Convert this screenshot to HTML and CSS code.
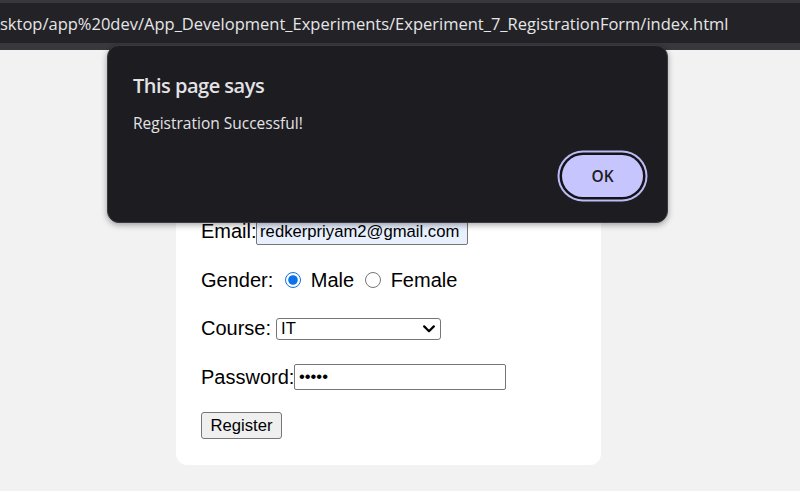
FILE: index.html
```html
<!DOCTYPE html>
<html lang="en">
<head>
<meta charset="utf-8">
<title>Registration Form</title>
<link rel="stylesheet" href="styles.css">
</head>
<body>
<header class="chrome">
  <div class="omnibox"><span class="url">sktop/app%20dev/App_Development_Experiments/Experiment_7_RegistrationForm/index.html</span></div>
</header>
<main class="page">
  <form class="card">
    <h2 class="card-title">Registration Form</h2>
    <div class="row">
      <label class="lbl" for="name">Name:</label><input class="field" id="name" type="text" value="Priyam Redker">
    </div>
    <div class="row">
      <label class="lbl" for="email">Email:</label><input class="field field-autofill" id="email" type="email" value="redkerpriyam2@gmail.com">
    </div>
    <div class="row">
      <span class="lbl lbl-gender">Gender:</span>
      <input class="radio" type="radio" name="g" id="male" checked><label class="opt opt-male" for="male">Male</label>
      <input class="radio" type="radio" name="g" id="female"><label class="opt" for="female">Female</label>
    </div>
    <div class="row">
      <label class="lbl lbl-course" for="course">Course:</label>
      <span class="select-wrap">
        <select class="select" id="course"><option>IT</option><option>CS</option><option>EXTC</option></select>
        <svg class="chev" width="12" height="8" viewBox="0 0 12 8" aria-hidden="true"><path d="M1.2 1.4 L6 6.2 L10.8 1.4" fill="none" stroke="#000" stroke-width="2.2" stroke-linecap="round" stroke-linejoin="round"/></svg>
      </span>
    </div>
    <div class="row">
      <label class="lbl" for="pw">Password:</label><input class="field field-pw" id="pw" type="password" value="12345">
    </div>
    <div class="row">
      <button class="btn" type="button">Register</button>
    </div>
  </form>
</main>
<div class="dialog" role="alertdialog">
  <div class="dlg-title">This page says</div>
  <div class="dlg-msg">Registration Successful!</div>
  <div class="dlg-foot"><button class="ok" type="button">OK</button></div>
</div>
</body>
</html>
```
FILE: styles.css
```css
html, body {
  margin: 0;
  padding: 0;
}
body {
  background: #f2f2f2;
  width: 800px;
  height: 491px;
  overflow: hidden;
  position: relative;
  font-family: "Liberation Sans", Arial, sans-serif;
}
.chrome {
  height: 50px;
  background: #38383d;
  padding-top: 3px;
  box-sizing: border-box;
}
.omnibox {
  height: 40px;
  background: #232327;
  display: flex;
  align-items: center;
  overflow: hidden;
  white-space: nowrap;
}
.url {
  font-family: "Open Sans", "Noto Sans", sans-serif;
  font-size: 16.5px;
  line-height: 22px;
  color: #e6e6e8;
  margin-left: 0;
  margin-top: 2px;
  letter-spacing: 0;
}
.page {
  padding-top: 30px;
}
.card {
  margin: 0 0 0 176px;
  width: 425px;
  box-sizing: border-box;
  background: #ffffff;
  border-radius: 11px;
  padding: 25px;
  display: flex;
  flex-direction: column;
  gap: 20.5px;
}
.card-title {
  margin: 0 0 15.5px 0;
  height: 28px;
  font-size: 24px;
  line-height: 28px;
  text-align: center;
}
.row {
  display: flex;
  align-items: center;
  height: 28px;
  font-size: 20px;
  color: #000;
}
.lbl {
  line-height: 23px;
}
.lbl-gender {
  margin-right: 11.5px;
}
.lbl-course {
  margin-right: 5px;
}
.field {
  width: 212px;
  height: 26px;
  box-sizing: border-box;
  border: 1px solid #767676;
  border-radius: 2px;
  padding: 1px 3.5px;
  font-family: "Liberation Sans", Arial, sans-serif;
  font-size: 16.67px;
  color: #000;
  background: #fff;
  margin: 0;
}
.field-autofill {
  background: #e8f0fe;
  margin-left: -1px;
}
.radio {
  width: 16px;
  height: 16px;
  margin: 0 10px 0 0;
  accent-color: #0b72e7;
}
.opt {
  line-height: 23px;
}
.opt-male {
  margin-right: 10.5px;
}
.select-wrap {
  position: relative;
  display: flex;
}
.select {
  -webkit-appearance: none;
  appearance: none;
  width: 165px;
  height: 22px;
  box-sizing: border-box;
  border: 1px solid #767676;
  border-radius: 3px;
  font-family: "Liberation Sans", Arial, sans-serif;
  font-size: 16.67px;
  line-height: 20px;
  padding: 0 2px 0 4px;
  background: #fff;
  color: #000;
  margin: 0;
}
.chev {
  position: absolute;
  right: 6px;
  top: 7px;
  pointer-events: none;
}
.btn {
  height: 27px;
  width: 81px;
  box-sizing: border-box;
  padding: 0 8px;
  border: 1px solid #767676;
  border-radius: 3px;
  background: #efefef;
  font-family: "Liberation Sans", Arial, sans-serif;
  font-size: 16.67px;
  color: #000;
  margin: 0;
}
.dialog {
  position: absolute;
  left: 107px;
  top: 45px;
  width: 561px;
  height: 178px;
  box-sizing: border-box;
  background: #1d1c21;
  border: 1px solid #3a393f;
  border-radius: 12px;
  box-shadow: 0 2px 6px rgba(0, 0, 0, 0.35);
  padding: 27.5px 24px 25px 25px;
  font-family: "Open Sans", "Noto Sans", sans-serif;
  color: #e3e3e6;
  display: flex;
  flex-direction: column;
}
.dlg-title {
  font-size: 20px;
  font-weight: 600;
  line-height: 24px;
  letter-spacing: -0.5px;
}
.dlg-msg {
  margin-top: 15.5px;
  font-size: 15.5px;
  line-height: 20px;
}
.dlg-foot {
  margin-top: 22px;
  display: flex;
  justify-content: flex-end;
}
.ok {
  width: 81px;
  height: 42px;
  border: none;
  border-radius: 21px;
  background: #c6c5fd;
  color: #1d1c21;
  font-family: "Open Sans", "Noto Sans", sans-serif;
  font-size: 15.5px;
  font-weight: 600;
  box-shadow: 0 0 0 2.5px #141318, 0 0 0 4.5px #bdbcf6;
  margin-right: 0;
}
```
